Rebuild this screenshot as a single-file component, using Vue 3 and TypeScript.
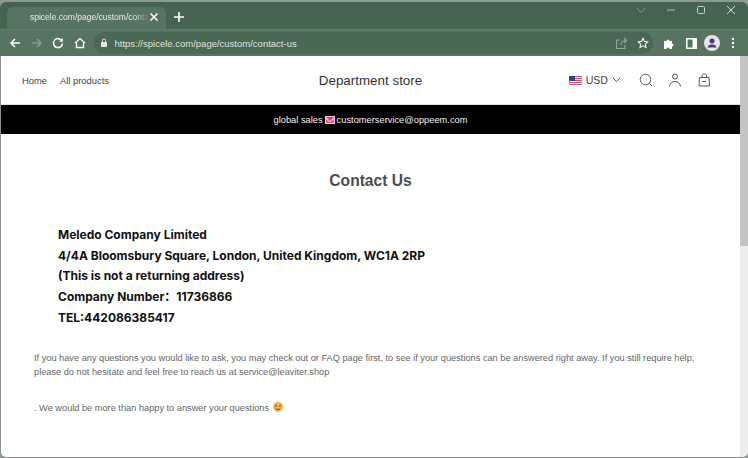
<script setup lang="ts">
const addressLines = [
  "Meledo Company Limited",
  "4/4A Bloomsbury Square, London, United Kingdom, WC1A 2RP",
  "(This is not a returning address)",
  "Company Number：11736866",
  "TEL:442086385417",
];
</script>

<template>
  <div class="window">
    <div class="tabstrip">
      <div class="tab">
        <span class="tab-title">spicele.com/page/custom/contac</span>
        <svg class="tab-close" width="10" height="10" viewBox="0 0 10 10">
          <path d="M1.5 1.5l7 7M8.5 1.5l-7 7" stroke="#fff" stroke-width="1.5" fill="none" />
        </svg>
      </div>
      <svg class="new-tab" width="12" height="12" viewBox="0 0 12 12">
        <path d="M6 1v10M1 6h10" stroke="#fff" stroke-width="1.6" fill="none" />
      </svg>
      <div class="win-controls">
        <svg width="10" height="7" viewBox="0 0 10 7">
          <path d="M1 1l4 4.5L9 1" stroke="#7f9a88" stroke-width="1" fill="none" />
        </svg>
        <svg width="10" height="10" viewBox="0 0 10 10">
          <path d="M1 5h8" stroke="#a9bcae" stroke-width="1" fill="none" />
        </svg>
        <svg width="10" height="10" viewBox="0 0 10 10">
          <rect x="1.5" y="1.5" width="7" height="7" rx="1" stroke="#c3d0c7" fill="none" />
        </svg>
        <svg width="10" height="10" viewBox="0 0 10 10">
          <path d="M1 1l8 8M9 1l-8 8" stroke="#d3ddd6" stroke-width="1" fill="none" />
        </svg>
      </div>
    </div>

    <div class="toolbar">
      <svg class="nav-icon" width="12" height="12" viewBox="0 0 12 12">
        <path d="M11 6H2M6 2L2 6l4 4" stroke="#fff" stroke-width="1.5" fill="none" />
      </svg>
      <svg class="nav-icon" width="12" height="12" viewBox="0 0 12 12">
        <path d="M1 6h9M6 2l4 4-4 4" stroke="#86a08f" stroke-width="1.5" fill="none" />
      </svg>
      <svg class="nav-icon" width="12" height="12" viewBox="0 0 12 12">
        <path d="M10 4a4.5 4.5 0 1 0 .5 2.5" stroke="#fff" stroke-width="1.5" fill="none" />
        <path d="M10.8 1v3.8H7z" fill="#fff" />
      </svg>
      <svg class="nav-icon" width="12" height="12" viewBox="0 0 12 12">
        <path d="M1 6l5-4.5L11 6M2.5 5v5.5h7V5" stroke="#fff" stroke-width="1.3" fill="none" />
      </svg>
      <div class="omnibox">
        <svg width="8" height="10" viewBox="0 0 8 10">
          <rect x="1" y="4" width="6" height="5" rx="0.6" fill="#dfe7e1" />
          <path d="M2.3 4V2.8a1.7 1.7 0 0 1 3.4 0V4" stroke="#dfe7e1" fill="none" />
        </svg>
        <span class="url">https://spicele.com/page/custom/contact-us</span>
        <svg class="omni-share" width="13" height="13" viewBox="0 0 13 13">
          <path d="M5 3H1.5v8.5H10V8M6 8c0-3 2-4.500 4.500-4.500M9 1l2.500 2.500L9 6" stroke="#8fa898" stroke-width="1.100" fill="none" />
        </svg>
        <svg width="12" height="12" viewBox="0 0 12 12">
          <path d="M6 1.300l1.450 3.100 3.400.4-2.500 2.300.65 3.350L6 8.800l-3 1.650.65-3.350-2.500-2.300 3.400-.4z" stroke="#f1f5f2" stroke-width="1.100" fill="none" />
        </svg>
      </div>
      <svg class="ext-icon puzzle" width="13" height="13" viewBox="0 0 13 13">
        <path d="M1 4h2.500a1.500 1.500 0 0 1 3 0H9v2.500a1.500 1.500 0 0 1 0 3V12H6.500a1.500 1.500 0 0 0-3 0H1z" fill="#fff" />
      </svg>
      <svg class="ext-icon panel" width="11" height="11" viewBox="0 0 11 11">
        <path d="M.8.800h9.400v9.400H.8z" stroke="#fff" stroke-width="1.500" fill="none" />
        <path d="M6.500 1h3.500v9H6.500z" fill="#fff" />
      </svg>
      <svg class="avatar" width="16" height="16" viewBox="0 0 16 16">
        <circle cx="8" cy="8" r="8" fill="#e6e4ee" />
        <circle cx="8" cy="6" r="2.500" fill="#4a3f6b" />
        <path d="M3.500 12.500c.5-2.500 2.500-3 4.500-3s4 .5 4.500 3z" fill="#4a3f6b" />
      </svg>
      <svg class="ext-icon dots" width="4" height="12" viewBox="0 0 4 12">
        <circle cx="2" cy="2" r="1.200" fill="#fff" />
        <circle cx="2" cy="6" r="1.200" fill="#fff" />
        <circle cx="2" cy="10" r="1.200" fill="#fff" />
      </svg>
    </div>

    <div class="viewport">
      <main class="page">
        <header class="site-header">
          <nav class="site-nav">
            <span>Home</span>
            <span>All products</span>
          </nav>
          <div class="site-title">Department store</div>
          <div class="site-actions">
            <svg class="flag" width="13" height="9" viewBox="0 0 13 9">
              <rect width="13" height="9" fill="#f3e6ea" />
              <path d="M0 0h13v1H0zM0 2h13v1H0zM0 4h13v1H0zM0 6h13v1H0zM0 8h13v1H0z" fill="#d0506a" />
              <rect width="6" height="5" fill="#33407a" />
            </svg>
            <span class="currency">USD</span>
            <svg class="caret" width="9" height="6" viewBox="0 0 9 6">
              <path d="M1 1l3.500 3.500L8 1" stroke="#555" stroke-width="1" fill="none" />
            </svg>
            <svg class="action search" width="14" height="14" viewBox="0 0 14 14">
              <circle cx="6.500" cy="6.500" r="5.300" stroke="#555" stroke-width="1" fill="none" />
              <path d="M10.300 10.300L13 13" stroke="#555" stroke-width="1" fill="none" />
            </svg>
            <svg class="action" width="14" height="14" viewBox="0 0 14 14">
              <circle cx="7" cy="3.500" r="2.500" stroke="#555" stroke-width="1" fill="none" />
              <path d="M1.500 13.500c.5-3.500 2.500-5 5.500-5s5 1.500 5.500 5" stroke="#555" stroke-width="1" fill="none" />
            </svg>
            <svg class="action" width="14" height="14" viewBox="0 0 14 14">
              <path d="M2.500 4.500h9.500l.5 8.500h-10.500z" stroke="#555" stroke-width="1" fill="none" />
              <path d="M5 4.500V2.500a1.500 1.500 0 0 1 1.500-1.500h1A1.500 1.500 0 0 1 9.500 2.500v2M5 8.500h4" stroke="#555" stroke-width="1" fill="none" />
            </svg>
          </div>
        </header>

        <div class="announcement">
          <span>global sales</span>
          <svg width="10" height="8" viewBox="0 0 10 8">
            <rect width="10" height="8" fill="#f4c6d4" />
            <path d="M1 1h8L5 5z" fill="#e0336f" />
            <path d="M1 3l4 3 4-3v4H1z" fill="#ee5c8e" />
          </svg>
          <span>customerservice@oppeem.com</span>
        </div>

        <h1 class="heading">Contact Us</h1>

        <div class="address">
          <p v-for="line in addressLines" :key="line">{{ line }}</p>
        </div>

        <p class="body-text">
          If you have any questions you would like to ask, you may check out or FAQ page first, to see if your questions can be answered right away. If you still require help, please do not hesitate and feel free to reach us at service@leaviter.shop
        </p>
        <p class="body-text closing">
          . We would be more than happy to answer your questions
          <svg class="smiley" width="10" height="10" viewBox="0 0 10 10">
            <circle cx="5" cy="5" r="5" fill="#eeb24a" />
            <path d="M2 4h2M6 4h2" stroke="#7a4a1a" stroke-width="1" />
            <path d="M3 6.800c1 .8 3 .8 4 0" stroke="#7a4a1a" stroke-width="1" fill="none" />
          </svg>
        </p>
      </main>
      <div class="scrollbar">
        <div class="scroll-thumb"></div>
      </div>
    </div>
  </div>
</template>

<style scoped>
.window {
  width: 748px;
  height: 458px;
  box-sizing: border-box;
  padding-top: 2px;
  display: flex;
  flex-direction: column;
  overflow: hidden;
  background: #8a9a8f;
  font-family: "Liberation Sans", Arial, sans-serif;
}
.tabstrip {
  height: 27px;
  flex: none;
  display: flex;
  align-items: flex-end;
  padding-left: 7px;
  background: #46634f;
  border-radius: 6px 6px 0 0;
}
.tab {
  width: 159px;
  height: 22px;
  flex: none;
  display: flex;
  align-items: center;
  box-sizing: border-box;
  padding: 0 7px 2px 23px;
  background: #56745f;
  border-radius: 6px 6px 0 0;
}
.tab-title {
  flex: 1;
  min-width: 0;
  white-space: nowrap;
  font-size: 8.5px;
  color: #e6ece8;
  -webkit-mask-image: linear-gradient(90deg, #000 88%, transparent 100%);
  mask-image: linear-gradient(90deg, #000 88%, transparent 100%);
}
.tab-close {
  flex: none;
}
.new-tab {
  margin: 0 0 6px 7px;
}
.win-controls {
  margin-left: auto;
  height: 100%;
  box-sizing: border-box;
  display: flex;
  align-items: center;
  gap: 20px;
  padding: 0 12px 11px 0;
}
.toolbar {
  height: 27px;
  flex: none;
  display: flex;
  align-items: center;
  padding: 0 11px 0 9px;
  background: #56745f;
  border-top: 1px solid #5f7d68;
  box-sizing: border-box;
}
.nav-icon {
  margin-right: 9.5px;
  flex: none;
}
.omnibox {
  margin-left: -1.500px;
  width: 559px;
  height: 22px;
  flex: none;
  display: flex;
  align-items: center;
  box-sizing: border-box;
  padding: 0 4px 0 6px;
  background: #4a6754;
  border-radius: 11px;
}
.url {
  margin-left: 7px;
  flex: 1;
  font-size: 9.5px;
  color: #dce5df;
}
.omni-share {
  margin-right: 9px;
}
.ext-icon {
  flex: none;
}
.puzzle {
  margin-left: 10px;
}
.panel {
  margin-left: 10px;
}
.avatar {
  margin-left: 7.500px;
  flex: none;
}
.dots {
  margin-left: 11px;
}
.viewport {
  flex: 1;
  display: flex;
  min-height: 0;
  background: #fff;
  border-left: 1px solid #8f8f8f;
  border-bottom: 1px solid #8a8a8a;
  border-radius: 0 0 6px 6px;
  overflow: hidden;
}
.page {
  flex: 1;
  min-width: 0;
}
.site-header {
  height: 48px;
  display: flex;
  align-items: center;
  position: relative;
  padding: 0 0 0 21px;
  border-bottom: 1px solid #dedede;
}
.site-nav {
  display: flex;
  gap: 13px;
  font-size: 9.4px;
  color: #3f3f3f;
}
.site-title {
  position: absolute;
  left: 0;
  right: 0;
  text-align: center;
  font-size: 13.4px;
  color: #333;
}
.site-actions {
  margin-left: auto;
  margin-right: 29px;
  display: flex;
  align-items: center;
}
.flag {
  margin-right: 4px;
}
.currency {
  font-size: 10.6px;
  color: #444;
}
.caret {
  margin: 0 0 0 4px;
}
.action {
  margin-left: 15px;
}
.search {
  margin-left: 18px;
}
.announcement {
  height: 29px;
  display: flex;
  align-items: center;
  justify-content: center;
  gap: 2px;
  background: #000;
  color: #f2f2f2;
  font-size: 9.3px;
}
.heading {
  margin: 37px 0 0;
  text-align: center;
  font-size: 15.6px;
  line-height: 20px;
  font-weight: 700;
  color: #4c4c4c;
}
.address {
  margin: 34px 0 0 57px;
}
.address p {
  margin: 0;
  font-family: Inter, "Noto Sans CJK SC", "Liberation Sans", sans-serif;
  font-weight: 700;
  font-size: 12px;
  line-height: 20.7px;
  color: #111;
}
.body-text {
  margin: 22px 0 0 33px;
  width: 680px;
  font-size: 9.23px;
  line-height: 14px;
  color: #666;
}
.closing {
  margin-top: 22px;
}
.smiley {
  vertical-align: -1px;
  margin-left: 1px;
}
.scrollbar {
  width: 8px;
  flex: none;
  background: #ececec;
}
.scroll-thumb {
  height: 190px;
  background: #c4c4c4;
}
</style>
